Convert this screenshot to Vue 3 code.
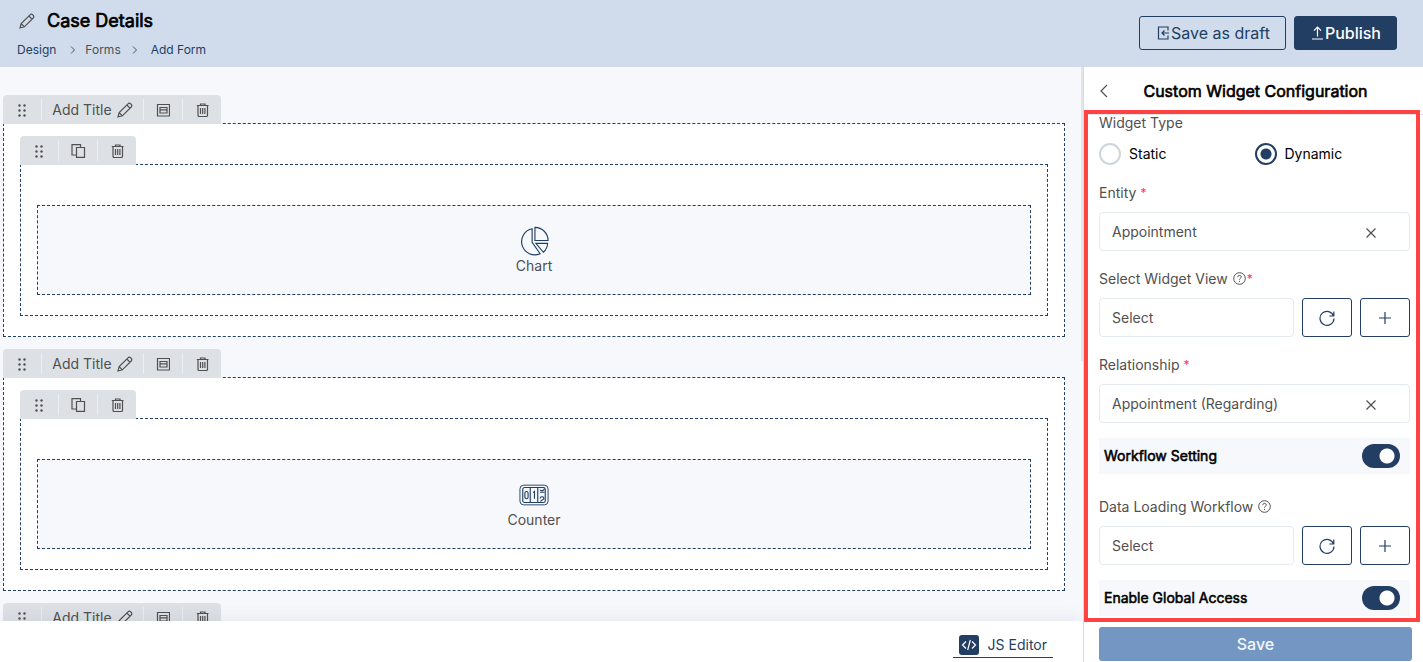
<script setup>
import { ref } from 'vue'

const sections = [
  { id: 1, kind: 'chart', label: 'Chart' },
  { id: 2, kind: 'counter', label: 'Counter' },
  { id: 3, kind: null, label: '' },
]
const widgetType = ref('dynamic')
const entity = ref('Appointment')
const view = ref('Select')
const relationship = ref('Appointment (Regarding)')
const workflow = ref('Select')
const workflowSetting = ref(true)
const globalAccess = ref(true)
</script>

<template>
  <svg class="defs" aria-hidden="true">
    <symbol id="i-pencil" viewBox="0 0 16 16">
      <path d="M1 15 2.200 10.600 11 1.800c.7-.8 1.800-.8 2.500-.1l.8.8c.7.7.7 1.800-.1 2.500L5.400 13.800zM2.200 10.600l3.200 3.200M9.800 3l3.200 3.200" />
    </symbol>
    <symbol id="i-dots" viewBox="0 0 12 14">
      <g fill="currentColor" stroke="none">
        <circle cx="3.500" cy="2.500" r="1.200" /><circle cx="8.500" cy="2.500" r="1.200" />
        <circle cx="3.500" cy="7.500" r="1.200" /><circle cx="8.500" cy="7.500" r="1.200" />
        <circle cx="3.500" cy="12.500" r="1.200" /><circle cx="8.500" cy="12.500" r="1.200" />
      </g>
    </symbol>
    <symbol id="i-form" viewBox="0 0 14 14">
      <path d="M1.500 1.500h12v11.500h-12zM4 4.500h7v5.500H4zM4 6.800h7" />
    </symbol>
    <symbol id="i-trash" viewBox="0 0 14 14">
      <path d="M1.800 2.500h11.700M5.500 2.500V1h4.500v1.500M3 2.500v9.700c0 .8.500 1.300 1.300 1.300h6.900c.8 0 1.300-.5 1.300-1.300V2.500M5.500 5v6M7.700 5v6M9.900 5v6" />
    </symbol>
    <symbol id="i-copy" viewBox="0 0 15 14">
      <path d="M5.500 3.500h8v9.800h-8zM5.500 11H1V.700h8.500v2.800" />
    </symbol>
    <symbol id="i-refresh" viewBox="0 0 16 16">
      <path d="M14.600 6A7 7 0 1 0 15 8.500M14.800 1.500V6h-4.500" />
    </symbol>
    <symbol id="i-plus" viewBox="0 0 14 14"><path d="M7 1v12M1 7h12" /></symbol>
    <symbol id="i-x" viewBox="0 0 12 12"><path d="m1.500 1.500 9 9m0-9-9 9" /></symbol>
    <symbol id="i-help" viewBox="0 0 14 14">
      <circle cx="7.500" cy="6.500" r="5.800" />
      <path d="M5.700 5.200c0-2.400 3.600-2.400 3.600-.2C9.300 6.300 7.500 6.300 7.500 7.700M7.500 8.900V10" />
    </symbol>
    <symbol id="i-chevron" viewBox="0 0 6 10"><path d="m1 1.500 3.500 3.500L1 8.500" /></symbol>
    <symbol id="i-chart" viewBox="0 0 32 32">
      <path d="M14 3A14 14 0 1 0 22.500 29.500L14 17.500zM17 1.500v14h14A14 14 0 0 0 17 1.500zM18 18.500h12.500a13 13 0 0 1-4.500 9.500z" />
    </symbol>
    <symbol id="i-counter" viewBox="0 0 32 24">
      <rect x="1" y="1.500" width="30" height="21" rx="4" stroke-width="1" />
      <rect x="4" y="4" width="24" height="16" rx="2" />
      <path d="M12 4v16M20 4v16M15 9.500l1.500-1.200V16M22.500 6.500c1 1.800 4.500 1 4.500-1.500M22.300 9h5M22.500 15.500c.5-2.500 4.500-2 4 .3-.2 1-3 2-3.700 3.200" />
      <rect x="6.300" y="8.300" width="3.400" height="7.700" rx="1.700" />
    </symbol>
  </svg>

  <div class="app">
    <header class="topbar">
      <div class="heading">
        <div class="title-row">
          <button class="bare" aria-label="Edit name"><svg class="icon i16"><use href="#i-pencil" /></svg></button>
          <h1>Case Details</h1>
        </div>
        <nav class="crumbs" aria-label="Breadcrumb">
          <a href="#design" class="strong">Design</a>
          <svg class="icon chev"><use href="#i-chevron" /></svg>
          <a href="#forms">Forms</a>
          <svg class="icon chev second"><use href="#i-chevron" /></svg>
          <a href="#add" class="strong">Add Form</a>
        </nav>
      </div>
      <div class="actions">
        <button class="btn outline">
          <svg class="icon i12" viewBox="0 0 12 14"><path d="M11 4.500V1H1.500v12H11V9.500M12 7H5M7.500 4.500 5 7l2.500 2.500" /></svg>Save as draft
        </button>
        <button class="btn solid">
          <svg class="icon i12" viewBox="0 0 12 14"><path d="M6.500 10.500V1.200M3 4.700l3.500-3.500L10 4.700M1 13h11" /></svg>Publish
        </button>
      </div>
    </header>

    <div class="body">
      <main class="workspace">
        <div class="canvas">
          <section v-for="s in sections" :key="s.id" class="section">
            <div class="tools">
              <button class="cell" aria-label="Move section"><svg class="icon dots"><use href="#i-dots" /></svg></button>
              <button class="cell wide">Add Title<svg class="icon i16"><use href="#i-pencil" /></svg></button>
              <button class="cell" aria-label="Section layout"><svg class="icon i14"><use href="#i-form" /></svg></button>
              <button class="cell" aria-label="Delete section"><svg class="icon i14"><use href="#i-trash" /></svg></button>
            </div>
            <div class="outer">
              <template v-if="s.kind">
                <div class="tools">
                  <button class="cell" aria-label="Move widget"><svg class="icon dots"><use href="#i-dots" /></svg></button>
                  <button class="cell" aria-label="Copy widget"><svg class="icon copy"><use href="#i-copy" /></svg></button>
                  <button class="cell" aria-label="Delete widget"><svg class="icon i14"><use href="#i-trash" /></svg></button>
                </div>
                <div class="inner">
                  <div class="widget">
                    <svg class="icon big"><use :href="'#i-' + s.kind" /></svg>
                    <span>{{ s.label }}</span>
                  </div>
                </div>
              </template>
            </div>
          </section>
          <div class="scroll-thumb"></div>
        </div>
        <footer class="footer">
          <a href="#js" class="js-link">
            <span class="js-icon"><svg class="icon i16" viewBox="0 0 16 16"><path d="M5 4.500 1.500 8 5 11.500M11 4.500 14.500 8 11 11.500M9.300 3 6.700 13" /></svg></span>JS Editor
          </a>
        </footer>
      </main>

      <aside class="panel">
        <div class="panel-head">
          <button class="bare back" aria-label="Back"><svg class="icon i14" viewBox="0 0 14 14"><path d="M10 1 4 7l6 6" /></svg></button>
          <h2>Custom Widget Configuration</h2>
        </div>
        <div class="panel-body">
          <fieldset class="types">
            <legend>Widget Type</legend>
            <div class="radios">
              <label><input v-model="widgetType" type="radio" name="type" value="static">Static</label>
              <label><input v-model="widgetType" type="radio" name="type" value="dynamic">Dynamic</label>
            </div>
          </fieldset>

          <div class="field">
            <label for="entity">Entity <em>*</em></label>
            <div class="clearable">
              <select id="entity" v-model="entity"><option>Appointment</option></select>
              <button class="bare clear" aria-label="Clear entity"><svg class="icon i12"><use href="#i-x" /></svg></button>
            </div>
          </div>

          <div class="field">
            <label for="view">Select Widget View <svg class="icon help"><use href="#i-help" /></svg><em>*</em></label>
            <div class="row">
              <select id="view" v-model="view"><option>Select</option></select>
              <button class="square" aria-label="Refresh views"><svg class="icon i16"><use href="#i-refresh" /></svg></button>
              <button class="square" aria-label="Add view"><svg class="icon i14"><use href="#i-plus" /></svg></button>
            </div>
          </div>

          <div class="field">
            <label for="relationship">Relationship <em>*</em></label>
            <div class="clearable">
              <select id="relationship" v-model="relationship"><option>Appointment (Regarding)</option></select>
              <button class="bare clear" aria-label="Clear relationship"><svg class="icon i12"><use href="#i-x" /></svg></button>
            </div>
          </div>

          <label class="toggle">Workflow Setting<input v-model="workflowSetting" type="checkbox" role="switch"></label>

          <div class="field after-toggle">
            <label for="workflow">Data Loading Workflow <svg class="icon help"><use href="#i-help" /></svg></label>
            <div class="row">
              <select id="workflow" v-model="workflow"><option>Select</option></select>
              <button class="square" aria-label="Refresh workflows"><svg class="icon i16"><use href="#i-refresh" /></svg></button>
              <button class="square" aria-label="Add workflow"><svg class="icon i14"><use href="#i-plus" /></svg></button>
            </div>
          </div>

          <label class="toggle">Enable Global Access<input v-model="globalAccess" type="checkbox" role="switch"></label>
        </div>
        <div class="panel-foot"><button class="save">Save</button></div>
        <div class="highlight"></div>
      </aside>
    </div>
  </div>
</template>

<style>
body { margin: 0; overflow: hidden; }
</style>

<style scoped>
* { box-sizing: border-box; }
.defs { position: absolute; width: 0; height: 0; }
.app {
  height: 100vh;
  display: flex;
  flex-direction: column;
  font: 14px/20px Inter, "Liberation Sans", sans-serif;
  color: #505050;
}
button, select, input { font: inherit; color: inherit; margin: 0; }
button { cursor: pointer; }
a { color: inherit; text-decoration: none; }
h1, h2, .toggle { margin: 0; color: #000; font-weight: 400; -webkit-text-stroke: 0.04em #000; }
.icon { flex: none; fill: none; stroke: currentColor; stroke-width: 1.2; display: block; }
.i12 { width: 12px; height: 14px; }
.i14 { width: 14px; height: 14px; }
.i16 { width: 16px; height: 16px; }
.bare { border: 0; background: none; padding: 0; }

.topbar {
  flex: none;
  height: 67px;
  padding: 0 26px 0 17px;
  background: #d0dcec;
  display: flex;
  justify-content: space-between;
}
.heading { padding-top: 7px; }
.title-row { display: flex; align-items: center; gap: 12px; padding-left: 2px; height: 28px; }
h1 { font-size: 18px; line-height: 28px; }
.crumbs { display: flex; align-items: center; font-size: 12px; height: 30px; }
.crumbs .strong { color: #223e63; }
.chev { width: 6px; height: 10px; margin: 0 9px 0 14px; stroke-width: 1; }
.chev.second { margin: 0 13px 0 11px; }
.actions { display: flex; gap: 8px; padding-top: 16px; }
.btn {
  height: 34px;
  padding: 0 15px 0 17px;
  border: 1px solid #223e63;
  border-radius: 3px;
  display: flex;
  align-items: center;
  gap: 2px;
  font-size: 16px;
}
.outline { background: none; color: #223e63; }
.solid { padding: 0 15px 0 16px; background: #223e63; color: #fff; font-weight: 500; }

.body { flex: 1; min-height: 0; display: flex; }
.workspace { flex: 1; min-width: 0; display: flex; flex-direction: column; }
.canvas {
  flex: 1;
  min-height: 0;
  overflow: hidden;
  position: relative;
  background: #f6f8fc;
  padding: 28px 18px 0 3px;
}
.scroll-thumb { position: absolute; top: 0; right: 0; width: 2px; height: 294px; background: #e2e5ea; }
.section { margin-bottom: 12px; }
.tools {
  width: max-content;
  height: 29px;
  margin-bottom: -1px;
  position: relative;
  display: flex;
  align-items: center;
  background: #dde1e6;
  border-radius: 4px 4px 0 0;
}
.cell {
  width: 39px;
  height: 21px;
  padding: 0;
  border: 0;
  border-right: 1px solid #eceff3;
  background: none;
  display: flex;
  align-items: center;
  justify-content: center;
  gap: 5px;
}
.cell.wide { width: 102px; }
.cell:last-child { width: 38px; border-right: 0; }
.dots { width: 12px; height: 14px; }
.copy { width: 15px; height: 14px; }
.outer { border: 1px dashed #223e63; background: #fff; padding: 12px 16px 20px; }
.inner { border: 1px dashed #223e63; padding: 40px 16px 20px; }
.widget {
  height: 90px;
  padding-top: 2px;
  border: 1px dashed #223e63;
  background: #f6f8fc;
  display: flex;
  flex-direction: column;
  align-items: center;
  justify-content: center;
}
.big { width: 30px; height: 30px; color: #223e63; overflow: visible; }
.footer {
  flex: none;
  height: 41px;
  position: relative;
  background: #fff;
  box-shadow: 0 -4px 16px #28324612;
  padding: 12px 30px 4px;
  display: flex;
  justify-content: flex-end;
}
.js-link {
  height: 25px;
  padding: 0 6px;
  border-bottom: 1px solid #223e63;
  color: #223e63;
  display: flex;
  align-items: center;
  gap: 9px;
}
.js-icon {
  width: 20px;
  height: 20px;
  border-radius: 3px;
  background: #223e63;
  color: #fff;
  display: grid;
  place-items: center;
}

.panel {
  flex: none;
  width: 340px;
  border-left: 1px solid #d4dce8;
  position: relative;
  display: flex;
  flex-direction: column;
  background: #fff;
}
.panel-head {
  flex: none;
  height: 48px;
  padding: 1px 13px 0;
  border-bottom: 1px solid #e2e5ec;
  display: flex;
  align-items: center;
}
h2 { flex: 1; padding-right: 17px; text-align: center; font-size: 16px; line-height: 22px; }
.back { margin-right: 7px; }
.panel-body { flex: 1; min-height: 0; overflow: hidden; padding: 0 13px 0 15px; }
.types { border: 0; margin: 0; padding: 0; }
legend { padding: 0; line-height: 16px; }
.radios { display: grid; grid-template-columns: 1fr 1fr; margin-top: 12px; color: #000; }
.radios label { display: flex; align-items: center; gap: 8px; }
input[type="radio"] {
  appearance: none;
  width: 22px;
  height: 22px;
  border: 2px solid #d0d5dc;
  border-radius: 50%;
  background: #fff;
}
input[type="radio"]:checked { border-color: #223e63; background: radial-gradient(circle, #223e63 5px, #fff 6px); }
.field { margin-top: 18px; }
.field > label { display: flex; align-items: center; gap: 4px; margin-bottom: 9px; }
em { font-style: normal; font-size: 12px; color: #f5365c; }
.help { width: 14px; height: 14px; stroke-width: 1; }
.help + em { margin-left: -3px; }
.clearable { position: relative; }
.clear { position: absolute; right: 33px; top: 14px; }
.row { display: flex; gap: 8px; }
select {
  appearance: none;
  width: 100%;
  min-width: 0;
  flex: 1;
  height: 39px;
  padding: 0 12px;
  border: 1px solid #e4e9f2;
  border-radius: 4px;
  background: #fff;
}
.square {
  width: 50px;
  height: 39px;
  padding: 0;
  border: 1px solid #223e63;
  border-radius: 3px;
  background: #fff;
  color: #223e63;
  display: grid;
  place-items: center;
}
.toggle {
  height: 36px;
  margin-top: 15px;
  padding: 0 10px 0 5px;
  background: #f6f8fc;
  display: flex;
  align-items: center;
  justify-content: space-between;
}
input[type="checkbox"] {
  appearance: none;
  width: 38px;
  height: 24px;
  border-radius: 12px;
  background: radial-gradient(circle at 25px 12px, #fff 7px, #223e63 8px);
}
.after-toggle { margin-top: 23px; }
.panel-foot { flex: none; padding: 6px 11px 1px 15px; }
.save {
  width: 100%;
  height: 34px;
  border: 0;
  border-radius: 3px;
  background: #7496c3;
  color: #f4f7fb;
  font-size: 16px;
  font-weight: 500;
}
.highlight {
  position: absolute;
  top: 43px;
  bottom: 40px;
  left: 0;
  right: 3px;
  border: 4px solid #ff4242;
  pointer-events: none;
}
</style>
